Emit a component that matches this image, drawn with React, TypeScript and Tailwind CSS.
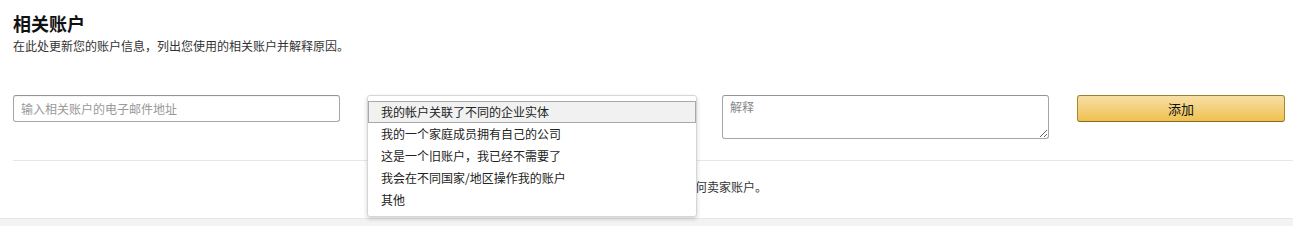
import React from "react";

const items = [
  "我的帐户关联了不同的企业实体",
  "我的一个家庭成员拥有自己的公司",
  "这是一个旧账户，我已经不需要了",
  "我会在不同国家/地区操作我的账户",
  "其他",
];

export default function App() {
  return (
    <div
      className="w-[1293px] bg-white text-[#111]"
      style={{ fontFamily: '"Noto Sans CJK SC", "Noto Sans", Arial, sans-serif' }}
    >
      <div className="pl-[13px] pt-[11px]">
        <h1 className="text-[18px] font-bold leading-[24px] text-[#111]">相关账户</h1>
        <p className="mt-[3px] text-[12px] leading-[16px] text-[#333]">
          在此处更新您的账户信息，列出您使用的相关账户并解释原因。
        </p>
      </div>

      <div className="mt-[41px] flex items-start pl-[13px]">
        <input
          className="h-[27px] w-[327px] rounded-[3px] border border-[#a6a6a6] border-t-[#949494] px-[7px] text-[12px] text-[#111] outline-none placeholder:text-[#999] shadow-[inset_0_1px_0_rgba(255,255,255,0.5),0_1px_0_rgba(0,0,0,0.07)_inset]"
          placeholder="输入相关账户的电子邮件地址"
        />
        <div className="relative ml-[27px] h-[27px] w-[330px]">
          <div className="absolute left-0 top-0 z-10 w-[330px] rounded-[3px] border border-[#d6d6d6] bg-white py-[5px] shadow-[0_2px_4px_rgba(0,0,0,0.18)]">
            {items.map((t, i) => (
              <div
                key={t}
                className={
                  i === 0
                    ? "h-[22px] border border-[#a9a9a9] bg-[#f1f1f1] pl-[12px] text-[12px] leading-[20px] text-[#222]"
                    : "h-[22px] border border-transparent pl-[12px] text-[12px] leading-[20px] text-[#222]"
                }
              >
                {t}
              </div>
            ))}
          </div>
        </div>
        <textarea
          className="ml-[25px] h-[44px] w-[327px] rounded-[3px] border border-[#a6a6a6] border-t-[#949494] px-[7px] pt-[3px] text-[12px] leading-[16px] text-[#111] outline-none placeholder:text-[#888]"
          placeholder="解释"
        />
        <button className="ml-[28px] h-[27px] w-[208px] rounded-[3px] border border-[#a88734] border-t-[#9c7e31] border-b-[#846a29] bg-gradient-to-b from-[#f7dfa5] to-[#f0c14b] text-[13px] leading-[25px] text-[#111]">
          添加
        </button>
      </div>

      <div className="ml-[13px] mt-[21px] border-t border-[#e7e7e7] pb-[23px] pt-[18px] text-center text-[12px] leading-[16px] text-[#333]">
        您尚未添加与此账户关联的任何卖家账户。
      </div>

      <div className="h-[8px] border-t border-[#e7e7e7] bg-[#f3f3f3]" />
    </div>
  );
}
